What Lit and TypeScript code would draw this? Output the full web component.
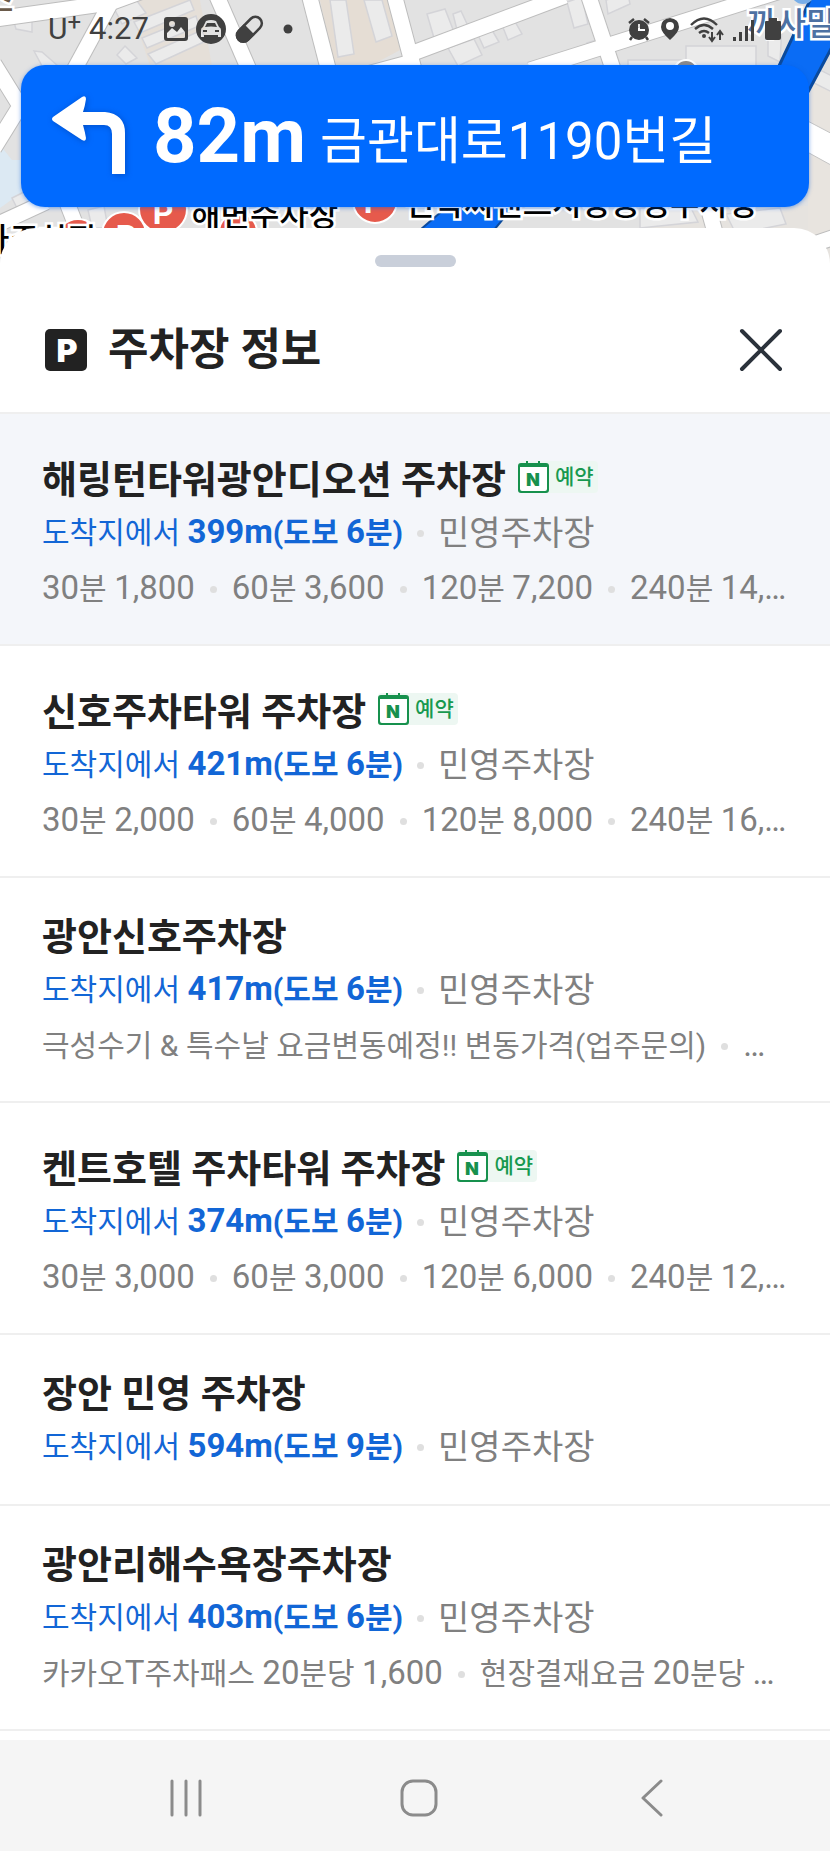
import { LitElement, html, svg, css } from "lit";
import { customElement, property } from "lit/decorators.js";

interface Lot {
  name: string;
  booking?: boolean;
  selected?: boolean;
  distance: string;
  fees: string[];
}

const LOTS: Lot[] = [
  { name: "해링턴타워광안디오션 주차장", booking: true, selected: true, distance: "399m(도보 6분)", fees: ["30분 1,800", "60분 3,600", "120분 7,200", "240분 14,…"] },
  { name: "신호주차타워 주차장", booking: true, distance: "421m(도보 6분)", fees: ["30분 2,000", "60분 4,000", "120분 8,000", "240분 16,…"] },
  { name: "광안신호주차장", distance: "417m(도보 6분)", fees: ["극성수기 & 특수날 요금변동예정!! 변동가격(업주문의)", "…"] },
  { name: "켄트호텔 주차타워 주차장", booking: true, distance: "374m(도보 6분)", fees: ["30분 3,000", "60분 3,000", "120분 6,000", "240분 12,…"] },
  { name: "장안 민영 주차장", distance: "594m(도보 9분)", fees: [] },
  { name: "광안리해수욕장주차장", distance: "403m(도보 6분)", fees: ["카카오T주차패스 20분당 1,600", "현장결재요금 20분당 …"] },
];

/* Latin letters and digits are set one step larger than the Hangul beside them. */
const mixed = (text: string) =>
  text
    .split(/([0-9A-Za-z,…]+)/)
    .filter((part) => part)
    .map((part) => (/[0-9A-Za-z,…]/.test(part) ? html`<span class="latin">${part}</span>` : part));

@customElement("street-map")
class StreetMap extends LitElement {
  static styles = css`
    :host { display: block; }
    svg { display: block; width: 100%; height: 100%; }
    .block { fill: #ebebeb; stroke: #d4d4d8; stroke-width: 1.5; }
    .case { fill: none; stroke: #bdbdbd; stroke-width: 17; }
    .road { fill: none; stroke: #fff; stroke-width: 15; }
    .label { font: 500 32px Roboto, "Noto Sans CJK KR", sans-serif; fill: #000; stroke: #fff; stroke-width: 5; paint-order: stroke; }
    .shop { fill: #4d71a3; }
    .village { fill: #6a5a4a; }
    .pin { fill: #e65a4c; stroke: #fff; stroke-width: 2; }
    .pin-mark { font: 700 32px Roboto, sans-serif; fill: #fff; text-anchor: middle; }
  `;

  render() {
    const roads = [
      "M-5 19L110 3L140 -8", "M110 4L73 72", "M216 -6L250 72", "M309 -6L329 72",
      "M394 -6L412 62L360 76", "M405 56L565 -4", "M588 -6L614 72", "M530 70L790 -12",
      "M-6 64L20 106L-6 148", "M-6 226L46 202", "M66 200L80 236", "M706 200L716 236", "M808 246L850 232",
    ];
    const blocks = [
      "M14 22L32 18L32 32L16 29Z", "M34 51L42 52L58 66L42 66Z", "M125 46L137 58L126 64L117 55Z",
      "M112 4L134 -3L146 13L122 24Z", "M134 22L190 0L194 10L140 33Z", "M142 38L196 16L199 26L147 48Z",
      "M148 54L202 30L206 41L156 64Z", "M330 0L346 0L354 54L338 57Z", "M364 0L382 0L392 36L376 42Z",
      "M427 14L445 9L454 32L434 38Z", "M453 14L461 11L468 26L457 30Z", "M448 48L474 39L482 55L458 66Z",
      "M478 35L492 30L499 42L484 48Z", "M502 25L514 20L522 34L508 40Z", "M567 2L582 -3L588 24L574 28Z",
      "M606 0L628 -6L630 4L608 14Z", "M587 43L600 39L602 48L588 52Z", "M686 46L756 46L756 70L628 70L628 60L686 60Z",
      "M768 26L782 26L780 62L768 56Z", "M12 198L28 190L46 206L20 214Z", "M88 210L104 206L108 228L92 228Z",
      "M640 208L690 206L698 222L640 228Z", "M726 214L780 208L786 224L736 234Z", "M800 60L840 80L840 96L800 76Z",
    ];
    return html`<svg viewBox="0 0 830 270" preserveAspectRatio="xMinYMin slice" aria-hidden="true">
      <rect width="830" height="270" fill="#e2e2e2" />
      <path d="M128 0L200 0L212 66L150 66Z" fill="#e5dfd8" />
      <path d="M320 0L388 0L400 50L370 66L334 66Z" fill="#e5ddd4" />
      <path d="M0 145L12 160L28 160L28 188L0 208Z" fill="#dce9f3" />
      <path d="M640 206L830 206L830 270L640 270Z" fill="#e6e3df" />
      <path d="M808 82L830 88L830 235L808 235Z" fill="#e8e4df" />
      ${blocks.map((d) => svg`<path class="block" d=${d} />`)}
      ${roads.map((d) => svg`<path class="case" d=${d} />`)}
      ${roads.map((d) => svg`<path class="road" d=${d} />`)}
      <path d="M800 117L840 138L840 170L800 148Z" fill="#fff" stroke="#c4c4c4" />
      <path d="M812 -4L840 -4L840 30L808 92L790 92L780 66Z" fill="#0a6cf5" />
      <path d="M812 -4L779 66M840 32L808 92" fill="none" stroke="#0b4a9c" stroke-width="3" />
      <path d="M448 206L420 230L494 230L514 206Z" fill="#0a6cf5" stroke="#0b4a9c" stroke-width="2" />
      <circle cx="686" cy="72" r="12" fill="#8f8b88" stroke="#fff" stroke-width="2" />
      <circle cx="803" cy="-8" r="12" fill="#78aee8" />
      <circle class="pin" cx="78" cy="240" r="21" fill="#b3343a" />
      <circle class="pin" cx="238" cy="232" r="19" />
      <circle class="pin" cx="163" cy="209" r="24" />
      <circle class="pin" cx="124" cy="234" r="22" />
      <circle class="pin" cx="375" cy="201" r="22" />
      <text class="pin-mark" x="163" y="224">P</text>
      <text class="pin-mark" x="126" y="247">P</text>
      <text class="pin-mark" x="374" y="213">P</text>
      <text class="label" x="191" y="226">해변주차장</text>
      <text class="label" x="405" y="215">민락씨랜드시장공영주차장</text>
      <text class="label" x="-20" y="251">가주차장</text>
      <text class="label village" x="-16" y="12">스</text>
      <text class="label shop" x="747" y="35">까사밀</text>
    </svg>`;
  }
}

@customElement("status-bar")
class StatusBar extends LitElement {
  static styles = css`
    :host { display: flex; justify-content: space-between; align-items: center; height: 56px; padding: 2px 48px 0; box-sizing: border-box; color: #404040; font: 400 31px/40px Roboto, "Noto Sans CJK KR", sans-serif; }
    .side { display: flex; align-items: center; gap: 8px; }
    .carrier { display: inline-flex; align-items: flex-start; font-size: 30px; }
    .plus { font-size: 24px; line-height: 26px; }
    .time { margin-right: 7px; }
    svg { display: block; fill: currentColor; }
  `;

  render() {
    return html`
      <div class="side">
        <span class="carrier">U<span class="plus">+</span></span>
        <time class="time">4:27</time>
        <svg width="24" height="24" viewBox="0 0 24 24"><path fill-rule="evenodd" d="M3 0H21Q24 0 24 3V21Q24 24 21 24H3Q0 24 0 21V3Q0 0 3 0ZM3 16V20Q3 21 4 21H20Q21 21 21 20V15L17 10L13 15L8 11ZM8 4A3 3 0 1 0 8 10A3 3 0 1 0 8 4Z" /></svg>
        <svg width="30" height="30" viewBox="0 0 30 30"><path fill-rule="evenodd" d="M15 0A15 15 0 1 1 15 30A15 15 0 1 1 15 0ZM10 7L7 13Q5 14 5 16V23H8V21H22V23H25V16Q25 14 23 13L20 7Q15 5 10 7ZM11 9H19L21 13Q15 12 9 13ZM7 16H11V18H7ZM19 16H23V18H19Z" /></svg>
        <svg width="30" height="30" viewBox="0 0 30 30"><g transform="rotate(45 15 15)"><rect x="9" y="0" width="13" height="30" rx="6.5" fill="none" stroke="currentColor" stroke-width="2.5" /><path d="M8 15H23V23.500A7.500 7.500 0 0 1 8 23.500Z" /></g></svg>
        <svg width="24" height="10" viewBox="0 0 24 10"><circle cx="16" cy="5" r="4.500" /></svg>
      </div>
      <div class="side">
        <svg width="26" height="24" viewBox="0 0 26 24"><path fill-rule="evenodd" d="M13 3A10 10 0 1 1 13 23A10 10 0 1 1 13 3ZM12 7V14H19V12H14V7Z" /><path d="M3 6L8 2M18 2L23 6M6 20L4 23M20 20L22 23" fill="none" stroke="currentColor" stroke-width="2.500" /></svg>
        <svg width="20" height="24" viewBox="0 0 20 24"><path fill-rule="evenodd" d="M10 1Q19 2 19 10Q19 15 10 23Q1 15 1 10Q1 2 10 1ZM10 5A4 4 0 1 0 10 13A4 4 0 1 0 10 5Z" /></svg>
        <svg width="36" height="28" viewBox="0 0 36 28"><g fill="none" stroke="currentColor" stroke-width="2.400"><path d="M3 10Q16 -3 29 10M7 14Q16 6 25 14M11 18Q16 14 21 18" /><path d="M24 17V25M21 22L24 26L27 22M32 25V17M29 20L32 16L35 20" stroke-width="2" /></g><circle cx="16" cy="21" r="2" /></svg>
        <svg width="24" height="24" viewBox="0 0 24 24"><path d="M1 20H4V24H1ZM7 15H10V24H7ZM13 9H16V24H13ZM19 3H22V24H19Z" /></svg>
        <svg width="18" height="24" viewBox="0 0 18 24"><path d="M5 1H13V4H16Q17 4 17 5V21Q17 23 15 23H3Q1 23 1 21V5Q1 4 2 4H5Z" /></svg>
      </div>
    `;
  }
}

@customElement("parking-item")
class ParkingItem extends LitElement {
  @property({ attribute: false }) lot!: Lot;

  static styles = css`
    :host { display: block; }
    .item { display: block; padding: 35px 42px 28px; border-bottom: 2px solid #efefef; color: #808080; text-decoration: none; font: 400 30px/54px Roboto, "Noto Sans CJK KR", sans-serif; }
    .item.booking { padding-top: 42px; }
    .item.selected { background: #f4f6fa; }
    .title { display: flex; align-items: center; gap: 12px; height: 48px; }
    .name { margin: 0; font-size: 38px; line-height: 48px; font-weight: 700; color: #222; white-space: nowrap; }
    .row { display: flex; align-items: center; height: 54px; white-space: nowrap; overflow: hidden; }
    .row > span { flex: none; }
    .row.where { height: 58px; }
    .from { color: #1266d6; }
    .from strong { font-weight: 700; }
    .kind { font-size: 34px; }
    .latin { font-size: 33px; line-height: 48px; }
    .dot { width: 7px; height: 7px; border-radius: 50%; background: #dfdfdf; margin: 0 15px; }
    .where .dot { margin: 0 14px; }
    .badge { display: flex; align-items: center; height: 32px; margin-bottom: 6px; padding-right: 4px; border-radius: 4px; background: #edf7f2; color: #17994f; font-size: 21px; line-height: 28px; font-weight: 500; }
    .badge svg { display: block; margin-right: 6px; }
    .mark { font: 900 18px Inter, sans-serif; fill: #17914d; text-anchor: middle; }
  `;

  render() {
    const { name, booking, selected, distance, fees } = this.lot;
    return html`<a class="item ${booking ? "booking" : ""} ${selected ? "selected" : ""}" href="#">
      <div class="title">
        <h2 class="name">${name}</h2>
        ${booking
          ? html`<span class="badge">
              <svg width="31" height="32" viewBox="0 0 31 32" aria-hidden="true">
                <path d="M1 4H30V29Q30 31 28 31H3Q1 31 1 29Z" fill="#fff" />
                <path fill-rule="evenodd" fill="#17914d" d="M8 0H10V2H20V0H22V2H28Q31 2 31 5V29Q31 32 28 32H3Q0 32 0 29V5Q0 2 3 2H8ZM2 6V28Q2 30 4 30H27Q29 30 29 28V6Z" />
                <text class="mark" x="15" y="25">N</text>
              </svg>예약</span>`
          : ""}
      </div>
      <div class="row where">
        <span class="from">도착지에서 <strong>${mixed(distance)}</strong></span>
        <span class="dot"></span>
        <span class="kind">민영주차장</span>
      </div>
      ${fees.length
        ? html`<div class="row">
            ${fees.map((fee, i) => html`${i ? html`<span class="dot"></span>` : ""}<span>${mixed(fee)}</span>`)}
          </div>`
        : ""}
    </a>`;
  }
}

@customElement("app-root")
class AppRoot extends LitElement {
  static styles = css`
    :host { display: flex; flex-direction: column; position: relative; min-height: 100vh; overflow: hidden; background: #fff; font-family: Roboto, "Noto Sans CJK KR", sans-serif; }
    button { border: 0; padding: 0; background: none; cursor: pointer; }
    svg { display: block; }
    .map { position: absolute; top: 0; left: 0; width: 100%; height: 270px; }
    .guide { position: relative; padding-bottom: 21px; }
    .banner { display: flex; align-items: center; gap: 14px; height: 142px; margin: 9px 21px 0; padding: 0 30px; box-sizing: border-box; border-radius: 24px; background: #006aff; color: #fff; box-shadow: 0 1px 4px rgba(0, 90, 220, 0.5); white-space: nowrap; }
    .turn { margin-right: 12px; filter: drop-shadow(1px 1px 3px rgba(0, 40, 120, 0.4)); }
    .left { font-size: 76px; line-height: 88px; font-weight: 700; }
    .street { padding-top: 12px; font-size: 51px; line-height: 72px; font-weight: 400; }
    .sheet { position: relative; flex: 1; border-radius: 36px 36px 0 0; background: #fff; }
    .grip { display: block; width: 81px; height: 12px; margin: 27px auto 0; border-radius: 6px; background: #c9cfda; }
    .head { display: flex; align-items: center; height: 125px; padding: 20px 42px 0 45px; border-bottom: 2px solid #efefef; }
    .head h1 { flex: 1; margin: 0 0 0 21px; font-size: 44px; line-height: 60px; font-weight: 700; color: #222; }
    .mark { font: 900 32px Inter, sans-serif; fill: #fff; text-anchor: middle; }
    ul { list-style: none; margin: 0; padding: 0 0 8px; }
    .keys { position: relative; display: grid; grid-template-columns: repeat(3, 1fr); height: 111px; padding: 5px 62px 0 70px; box-sizing: border-box; background: #f5f5f5; }
    .keys button { display: grid; place-items: center; }
    .keys svg { fill: none; stroke: #8b8b8b; stroke-width: 3; stroke-linecap: round; stroke-linejoin: round; }
  `;

  render() {
    return html`
      <street-map class="map"></street-map>
      <header class="guide">
        <status-bar></status-bar>
        <div class="banner">
          <svg class="turn" width="76" height="80" viewBox="0 0 76 80" aria-hidden="true">
            <path fill="#fff" d="M2 21L31 1Q35 -1 35 3Q34 10 32 16H54Q74 18 74 37V78H61V38Q61 29 53 29H32Q34 36 35 42Q35 46 31 44L2 25Q0 23 2 21Z" />
          </svg>
          <strong class="left">82m</strong>
          <span class="street">금관대로1190번길</span>
        </div>
      </header>
      <main class="sheet">
        <button class="grip" aria-label="패널 크기 조절"></button>
        <div class="head">
          <svg width="42" height="42" viewBox="0 0 42 42" aria-hidden="true">
            <rect width="42" height="42" rx="5" fill="#222" />
            <text class="mark" x="22" y="33">P</text>
          </svg>
          <h1>주차장 정보</h1>
          <button aria-label="닫기">
            <svg width="54" height="54" viewBox="0 0 54 54"><path d="M8 8L46 46M46 8L8 46" stroke="#2b323b" stroke-width="4" stroke-linecap="round" /></svg>
          </button>
        </div>
        <ul>
          ${LOTS.map((lot) => html`<li><parking-item .lot=${lot}></parking-item></li>`)}
        </ul>
      </main>
      <nav class="keys">
        <button aria-label="최근 앱"><svg width="34" height="38" viewBox="0 0 34 38"><path d="M3 2V36M17 2V36M31 2V36" /></svg></button>
        <button aria-label="홈"><svg width="38" height="38" viewBox="0 0 38 38"><rect x="2" y="2" width="34" height="34" rx="11" /></svg></button>
        <button aria-label="뒤로"><svg width="22" height="38" viewBox="0 0 22 38"><path d="M20 2L2 19L20 36" /></svg></button>
      </nav>
    `;
  }
}
